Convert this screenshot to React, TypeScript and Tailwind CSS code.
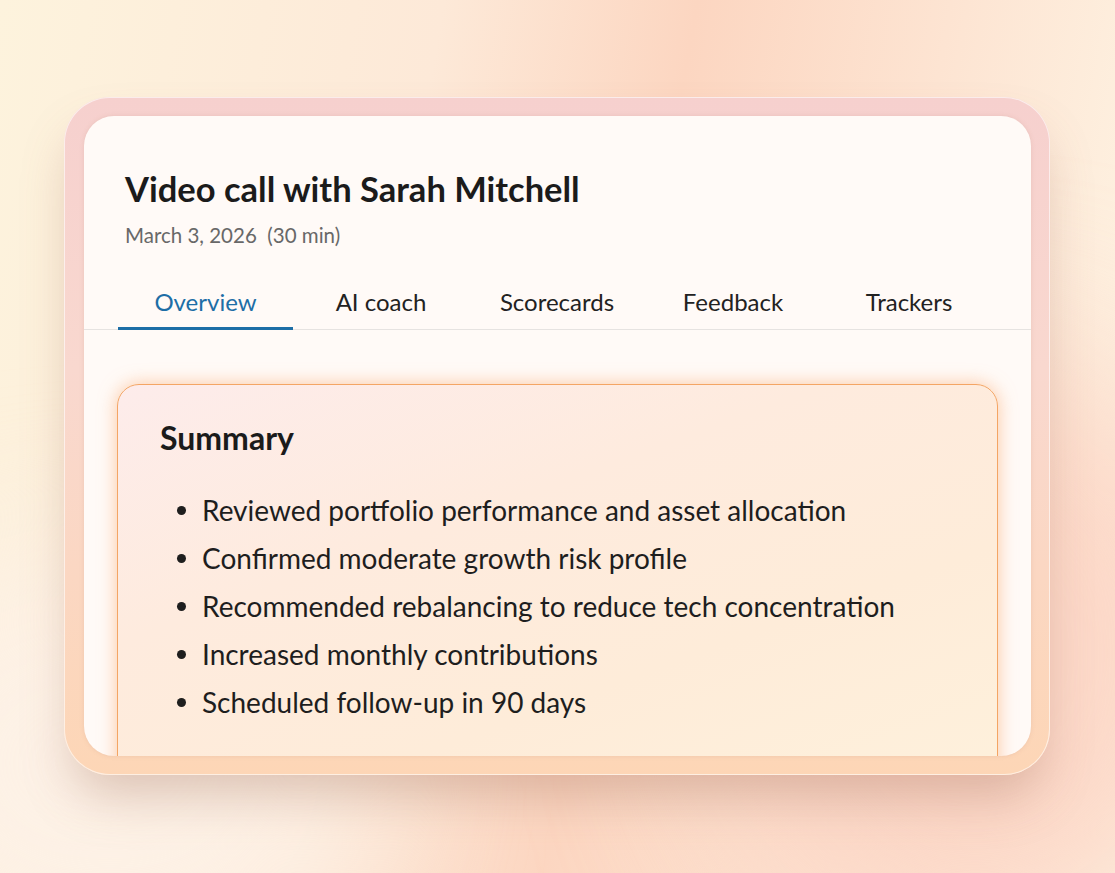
import React from 'react'

const tabs = ['Overview', 'AI coach', 'Scorecards', 'Feedback', 'Trackers']

const summary = [
  'Reviewed portfolio performance and asset allocation',
  'Confirmed moderate growth risk profile',
  'Recommended rebalancing to reduce tech concentration',
  'Increased monthly contributions',
  'Scheduled follow-up in 90 days',
]

export default function App() {
  return (
    <div
      className="relative w-full h-[873px] overflow-hidden bg-[linear-gradient(100deg,#fdf3dd_0%,#fde9d8_35%,#fcd6c1_55%,#fde4d2_75%,#fef6e6_100%)]"
      style={{ fontFamily: 'Lato, "Open Sans", sans-serif' }}
    >
      {/* soft background blobs */}
      <div className="absolute inset-0 pointer-events-none">
        <div className="absolute right-[-120px] bottom-[-80px] w-[520px] h-[600px] rounded-full bg-[#fbcdbe]/75 blur-[90px]" />
        <div className="absolute left-[-150px] bottom-[-100px] w-[520px] h-[420px] rounded-full bg-[#fdf1e6] blur-[80px]" />
      </div>

      <div className="relative pt-[97px] pl-[64px]">
        {/* outer frame */}
        <div className="w-[986px] h-[678px] rounded-[46px] p-[19px] pl-[20px] bg-[linear-gradient(180deg,#f6d0ce_0%,#f9d8cf_40%,#fdd6b6_100%)] shadow-[0_30px_50px_-10px_rgba(160,110,90,0.35),inset_0_0_0_1px_rgba(255,255,255,0.6)]">
          {/* inner card */}
          <div className="h-full rounded-[30px] overflow-hidden bg-[#fffaf7] shadow-[0_0_4px_rgba(200,150,130,0.25)]">
            <div className="pt-[53px] pl-[41px]">
              <h1 className="text-[34.5px] leading-[40px] font-bold text-[#1b1b1b]">
                Video call with Sarah Mitchell
              </h1>
              <p className="mt-[14px] text-[20.5px] leading-[24px] text-[#686868]">
                March 3, 2026&nbsp;&nbsp;(30 min)
              </p>
            </div>

            <div className="mt-[41px] border-b border-[#e6e3e1] pl-[34px] flex">
              {tabs.map((t, i) => (
                <div
                  key={t}
                  className={
                    i === 0
                      ? 'w-[175px] pb-[11px] text-center text-[24px] leading-[28px] text-[#1d6ea6] border-b-[3px] border-[#1d6ea6] -mb-[1px]'
                      : 'w-[176px] pb-[11px] text-center text-[24px] leading-[28px] text-[#222222] border-b-[3px] border-transparent -mb-[1px]'
                  }
                >
                  {t}
                </div>
              ))}
            </div>

            {/* summary card */}
            <div className="mt-[54px] mx-[33px] h-[420px] rounded-[22px] border border-[#f4a564] bg-[linear-gradient(160deg,#fdeceb_0%,#feebde_35%,#feecd9_65%,#fef1dc_100%)] shadow-[0_0_18px_rgba(250,160,95,0.55)] pt-[35px] pl-[42px]">
              <h2 className="text-[32px] leading-[36px] font-bold text-[#1b1b1b]">Summary</h2>
              <ul className="mt-[30px]">
                {summary.map((s) => (
                  <li key={s} className="flex items-center text-[28px] leading-[48px] text-[#1e1e1e]">
                    <span className="ml-[17px] mr-[16px] w-[9px] h-[9px] rounded-full bg-[#1e1e1e] shrink-0" />
                    {s}
                  </li>
                ))}
              </ul>
            </div>
          </div>
        </div>
      </div>
    </div>
  )
}
